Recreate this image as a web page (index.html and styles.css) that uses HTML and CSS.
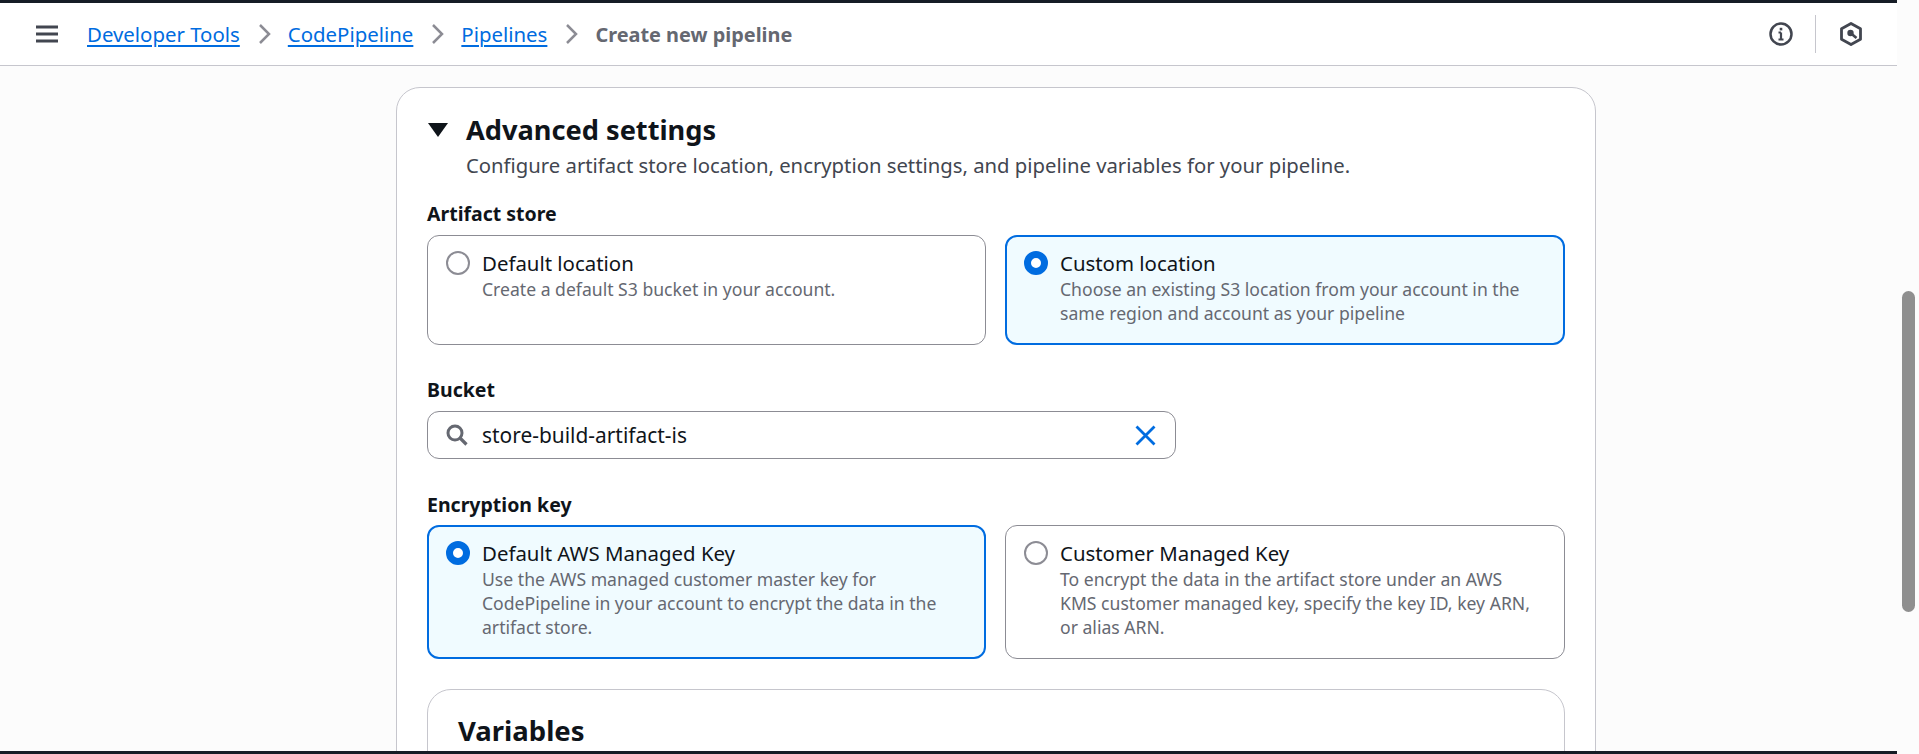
FILE: index.html
```html
<!DOCTYPE html>
<html lang="en">
<head>
<meta charset="utf-8">
<title>Create new pipeline</title>
<link rel="stylesheet" href="styles.css">
</head>
<body>
<div class="viewport">
  <header class="topbar">
    <svg class="menu-icon" width="22" height="18" viewBox="0 0 22 18"><path d="M0 2h22M0 9h22M0 16h22" stroke="#424650" stroke-width="3" fill="none"/></svg>
    <nav class="crumbs">
      <a class="crumb-link">Developer Tools</a>
      <svg class="chev" width="13" height="22" viewBox="0 0 13 22"><path d="M2 2l9 9-9 9" stroke="#8c8c94" stroke-width="2.5" fill="none"/></svg>
      <a class="crumb-link">CodePipeline</a>
      <svg class="chev" width="13" height="22" viewBox="0 0 13 22"><path d="M2 2l9 9-9 9" stroke="#8c8c94" stroke-width="2.5" fill="none"/></svg>
      <a class="crumb-link">Pipelines</a>
      <svg class="chev" width="13" height="22" viewBox="0 0 13 22"><path d="M2 2l9 9-9 9" stroke="#8c8c94" stroke-width="2.5" fill="none"/></svg>
      <span class="crumb-current">Create new pipeline</span>
    </nav>
    <div class="top-actions">
      <svg width="24" height="24" viewBox="0 0 24 24"><circle cx="12" cy="12" r="10.5" stroke="#424650" stroke-width="2.5" fill="none"/><path d="M12 10.5v7M9.5 17.5h5M9.5 10.5H12" stroke="#424650" stroke-width="2.2" fill="none"/><rect x="10.7" y="5.8" width="2.6" height="2.6" fill="#424650"/></svg>
      <span class="top-divider"></span>
      <svg width="22" height="24" viewBox="0 0 22 24"><path d="M11 1.5l9.5 5.2v10.6L11 22.5 1.5 17.3V6.7z" stroke="#424650" stroke-width="2.8" fill="none" stroke-linejoin="round"/><circle cx="10.5" cy="11" r="3.2" fill="#424650"/><path d="M10.5 11l6 5" stroke="#424650" stroke-width="2.6"/></svg>
    </div>
  </header>
  <main class="content">
    <section class="panel">
      <div class="panel-head">
        <svg class="caret" width="20" height="14" viewBox="0 0 20 14"><path d="M0 0h20L10 14z" fill="#0f141a"/></svg>
        <h2 class="panel-title">Advanced settings</h2>
      </div>
      <p class="panel-desc">Configure artifact store location, encryption settings, and pipeline variables for your pipeline.</p>

      <div class="field-label first">Artifact store</div>
      <div class="tiles tiles-store">
        <div class="tile">
          <span class="radio"></span>
          <div><div class="tile-title">Default location</div><div class="tile-desc">Create a default S3 bucket in your account.</div></div>
        </div>
        <div class="tile selected">
          <span class="radio on"></span>
          <div><div class="tile-title">Custom location</div><div class="tile-desc">Choose an existing S3 location from your account in the same region and account as your pipeline</div></div>
        </div>
      </div>

      <div class="field-label bucket">Bucket</div>
      <div class="search">
        <svg width="22" height="22" viewBox="0 0 22 22"><circle cx="9" cy="9" r="7" stroke="#656871" stroke-width="3" fill="none"/><path d="M14 14l6.5 6.5" stroke="#656871" stroke-width="3.2"/></svg>
        <span class="search-text">store-build-artifact-is</span>
        <svg width="21" height="21" viewBox="0 0 21 21"><path d="M1.5 1.5l18 18M19.5 1.5l-18 18" stroke="#006ce0" stroke-width="2.8" fill="none"/></svg>
      </div>

      <div class="field-label encryption">Encryption key</div>
      <div class="tiles tiles-key">
        <div class="tile selected">
          <span class="radio on"></span>
          <div><div class="tile-title">Default AWS Managed Key</div><div class="tile-desc">Use the AWS managed customer master key for CodePipeline in your account to encrypt the data in the artifact store.</div></div>
        </div>
        <div class="tile">
          <span class="radio"></span>
          <div><div class="tile-title">Customer Managed Key</div><div class="tile-desc">To encrypt the data in the artifact store under an AWS KMS customer managed key, specify the key ID, key ARN, or alias ARN.</div></div>
        </div>
      </div>

      <section class="variables">
        <h2 class="variables-title">Variables</h2>
      </section>
    </section>
  </main>
  <div class="scroll-strip"><div class="scroll-thumb"></div></div>
  <div class="bottom-bar"></div>
</div>
</body>
</html>
```
FILE: styles.css
```css
* { box-sizing: border-box; }
html, body { margin: 0; padding: 0; height: 754px; overflow: hidden; }
body { font-family: "Noto Sans", "Open Sans", sans-serif; color: #0f141a; background: #fcfcfc; }
.viewport { position: relative; width: 1919px; height: 754px; overflow: hidden; }

.topbar {
  width: 1897px; height: 66px;
  border-top: 3px solid #161d26;
  border-bottom: 1px solid #c6c6cd;
  background: #fff;
  display: flex; align-items: center;
  padding: 0 35px 0 36px;
}
.menu-icon { margin-right: 29px; }
.crumbs { display: flex; align-items: center; font-size: 20.4px; }
.crumb-link { color: #006ce0; text-decoration: underline; text-decoration-thickness: 1.5px; text-underline-offset: 3px; }
.chev { margin: 0 17px 0 18px; }
.crumb-current { color: #656871; font-weight: 700; font-size: 19.9px; }
.top-actions { margin-left: auto; display: flex; align-items: center; }
.top-divider { width: 1px; height: 38px; background: #c6c6cd; margin: 0 24px 0 22px; }

.content { height: 685px; padding: 21px 0 0 396px; width: 1897px; }
.panel {
  width: 1200px; height: 700px;
  background: #fff;
  border: 1px solid #c6c6cd;
  border-radius: 24px;
  padding: 22px 30px 0;
}
.panel-head { display: flex; align-items: center; height: 40px; }
.caret { margin: 0 18px 0 1px; }
.panel-title { margin: 0; font-size: 27.2px; line-height: 40px; font-weight: 700; }
.panel-desc { margin: 3px 0 0 39px; font-size: 20.3px; line-height: 25px; color: #424650; }
.field-label { font-size: 19.5px; line-height: 25px; font-weight: 700; }
.field-label.first { margin-top: 23px; }
.field-label.bucket { margin-top: 32px; }
.field-label.encryption { margin-top: 33px; }

.tiles { display: grid; grid-template-columns: 559px 560px; gap: 19px; margin-top: 9px; }
.tiles-store { height: 110px; }
.tiles-key { height: 134px; margin-top: 8px; }
.tile {
  display: flex; gap: 12px;
  border: 1px solid #8c8c94;
  border-radius: 12px;
  padding: 15px 30px 15px 18px;
  background: #fff;
}
.tile.selected { border: 2px solid #006ce0; background: #f0fbff; padding: 14px 29px 14px 17px; }
.radio {
  flex: none; width: 24px; height: 24px; border-radius: 50%;
  border: 2px solid #8c8c94; background: #fff;
}
.radio.on { border: 7px solid #006ce0; }
.tile-title { font-size: 20.4px; line-height: 24px; }
.tile-desc { font-size: 17.6px; line-height: 24px; color: #656871; margin-top: 2px; }

.search {
  margin-top: 9px; width: 749px; height: 48px;
  border: 1px solid #8c8c94; border-radius: 12px;
  display: flex; align-items: center;
  padding: 0 19px 0 18px;
}
.search-text { flex: 1; margin-left: 14px; font-size: 20.9px; }

.variables {
  margin-top: 30px; height: 120px;
  border: 1px solid #c6c6cd; border-radius: 24px;
  padding: 21px 30px 0;
}
.variables-title { margin: 0; font-size: 27.5px; line-height: 40px; font-weight: 700; }

.scroll-strip { position: absolute; top: 0; right: 0; width: 22px; height: 754px; background: #fcfcfc; }
.scroll-thumb { position: absolute; left: 5px; top: 291px; width: 13px; height: 321px; border-radius: 7px; background: #8f8f8f; }
.bottom-bar { position: absolute; left: 0; bottom: 0; width: 1897px; height: 3px; background: #161d26; }
```
